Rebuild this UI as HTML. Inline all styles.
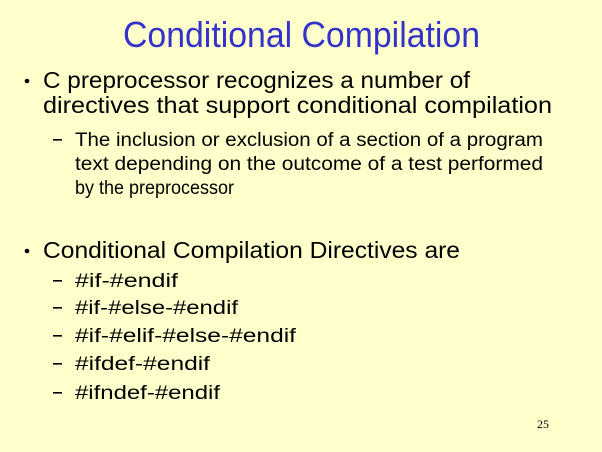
<!DOCTYPE html>
<html><head><style>
html,body{margin:0;padding:0;background:#FFFFCC;}
svg{display:block;}
text{font-family:"Liberation Sans",sans-serif;fill:#000;}
</style></head><body>
<svg width="602" height="452" viewBox="0 0 602 452">
<rect width="602" height="452" fill="#FFFFCC"/>
<text x="123" y="47" font-size="36" fill="#3333CC" style="fill:#3333CC" textLength="357" lengthAdjust="spacingAndGlyphs">Conditional Compilation</text>
<circle cx="27" cy="81" r="2.3" fill="#000"/>
<text x="43" y="88" font-size="23" textLength="427" lengthAdjust="spacingAndGlyphs">C preprocessor recognizes a number of</text>
<text x="43" y="113" font-size="23" textLength="509" lengthAdjust="spacingAndGlyphs">directives that support conditional compilation</text>
<rect x="53" y="139" width="9" height="1.6" fill="#000"/>
<text x="75" y="146" font-size="19" textLength="468" lengthAdjust="spacingAndGlyphs">The inclusion or exclusion of a section of a program</text>
<text x="75" y="170" font-size="19" textLength="468" lengthAdjust="spacingAndGlyphs">text depending on the outcome of a test performed</text>
<text x="75" y="194" font-size="19" textLength="159" lengthAdjust="spacingAndGlyphs">by the preprocessor</text>
<circle cx="27" cy="251" r="2.3" fill="#000"/>
<text x="43" y="258" font-size="23" textLength="417" lengthAdjust="spacingAndGlyphs">Conditional Compilation Directives are</text>
<rect x="53" y="280" width="9" height="1.6" fill="#000"/>
<text x="75" y="287" font-size="19" textLength="103" lengthAdjust="spacingAndGlyphs">#if-#endif</text>
<rect x="53" y="307" width="9" height="1.6" fill="#000"/>
<text x="75" y="314" font-size="19" textLength="163" lengthAdjust="spacingAndGlyphs">#if-#else-#endif</text>
<rect x="53" y="335" width="9" height="1.6" fill="#000"/>
<text x="75" y="342" font-size="19" textLength="221" lengthAdjust="spacingAndGlyphs">#if-#elif-#else-#endif</text>
<rect x="53" y="363" width="9" height="1.6" fill="#000"/>
<text x="75" y="370" font-size="19" textLength="135" lengthAdjust="spacingAndGlyphs">#ifdef-#endif</text>
<rect x="53" y="392" width="9" height="1.6" fill="#000"/>
<text x="75" y="399" font-size="19" textLength="145" lengthAdjust="spacingAndGlyphs">#ifndef-#endif</text>
<text x="537" y="428" font-size="12" style="font-family:'Liberation Serif',serif">25</text>
</svg>
</body></html>
